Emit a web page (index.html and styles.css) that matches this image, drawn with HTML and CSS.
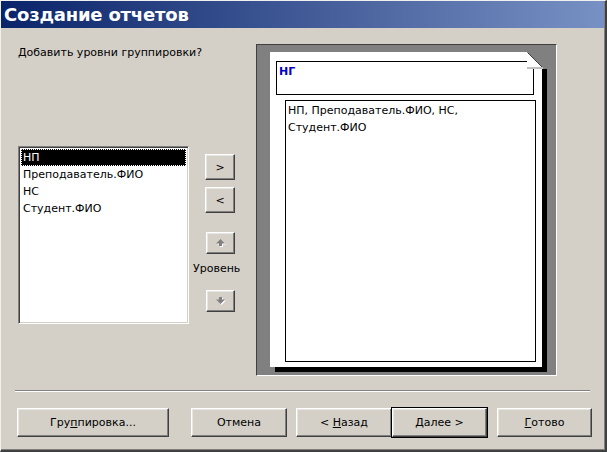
FILE: index.html
```html
<!DOCTYPE html>
<html lang="ru">
<head>
    <meta charset="UTF-8">
    <title>Создание отчетов</title>
    <link rel="stylesheet" href="styles.css">
</head>
<body>
    <div class="window">
        <div class="titlebar">Создание отчетов</div>

        <div class="main">
            <!-- Available fields -->
            <div class="left">
                <p class="prompt">Добавить уровни группировки?</p>
                <ul class="listbox">
                    <li class="selected">НП</li>
                    <li>Преподаватель.ФИО</li>
                    <li>НС</li>
                    <li>Студент.ФИО</li>
                </ul>
            </div>

            <!-- Move buttons -->
            <div class="mover">
                <button class="btn move add">&gt;</button>
                <button class="btn move remove">&lt;</button>
                <button class="btn level-btn up">
                    <svg width="10" height="9" viewBox="0 0 10 9">
                        <polygon points="5.5,1 10,5.5 7,5.5 7,8 4,8 4,5.5 1,5.5" fill="#fff"/>
                        <polygon points="4.5,0 9,4.5 6,4.5 6,7 3,7 3,4.5 0,4.5" fill="#808080"/>
                    </svg>
                </button>
                <span class="level">Уровень</span>
                <button class="btn level-btn down">
                    <svg width="10" height="9" viewBox="0 0 10 9">
                        <polygon points="5.5,8 10,3.5 7,3.5 7,1 4,1 4,3.5 1,3.5" fill="#fff"/>
                        <polygon points="4.5,7 9,2.5 6,2.5 6,0 3,0 3,2.5 0,2.5" fill="#808080"/>
                    </svg>
                </button>
            </div>

            <!-- Report preview -->
            <div class="preview">
                <div class="page">
                    <svg class="fold" width="20" height="17" viewBox="0 0 20 17">
                        <rect x="0" y="0" width="20" height="17" fill="#808080"/>
                        <rect x="0" y="15" width="16" height="2" fill="#c0c0c0"/>
                        <polygon points="0,0 15,15 0,15" fill="#fff"/>
                        <line x1="0.5" y1="0.5" x2="15" y2="15" stroke="#404040" stroke-width="1"/>
                    </svg>
                    <div class="page-head">НГ</div>
                    <div class="page-body">НП, Преподаватель.ФИО, НС,<br>Студент.ФИО</div>
                </div>
            </div>
        </div>

        <div class="separator"></div>

        <div class="actions">
            <button class="btn wide">Гру<u>п</u>пировка...</button>
            <button class="btn cancel">Отмена</button>
            <button class="btn back">&lt;&nbsp;<u>Н</u>азад</button>
            <button class="btn next default"><u>Д</u>алее&nbsp;&gt;</button>
            <button class="btn finish"><u>Г</u>отово</button>
        </div>
    </div>
</body>
</html>
```

FILE: styles.css
```css
/* Reset */
* {
    margin: 0;
    padding: 0;
    box-sizing: border-box;
}

body {
    font-family: 'DejaVu Sans', 'Liberation Sans', sans-serif;
    font-size: 11px;
    color: #000;
    background: #d4d0c8;
}

/* Window frame */
.window {
    width: 607px;
    height: 452px;
    background: #d4d0c8;
    border-top: 1px solid #f0f0f0;
    border-left: 1px solid #f0f0f0;
    border-right: 2px solid #404040;
    border-bottom: 2px solid #404040;
    box-shadow: inset -1px -1px #808080;
}

.titlebar {
    height: 27px;
    margin-right: 1px;
    padding-left: 3px;
    background: linear-gradient(to right, #0a246a, #7891c4);
    color: #fff;
    font-weight: bold;
    font-size: 18px;
    letter-spacing: -0.2px;
    line-height: 27px;
}

/* Main area */
.main {
    display: flex;
    padding: 16px 0 0 17px;
    height: 348px;
}

.left {
    width: 171px;
}

.prompt {
    margin-top: 2px;
    line-height: 14px;
    white-space: nowrap;
}

.listbox {
    list-style: none;
    margin-top: 86px;
    height: 178px;
    background: #fff;
    border: 1px solid;
    border-color: #808080 #fff #fff #808080;
    box-shadow: inset 1px 1px #404040, inset -1px -1px #d4d0c8;
    padding: 2px;
}

.listbox li {
    height: 17px;
    line-height: 17px;
    padding-left: 2px;
    white-space: nowrap;
}

.listbox li.selected {
    background: #000;
    color: #fff;
    outline: 1px dotted #fff;
    outline-offset: -1px;
}

/* Buttons */
.btn {
    font: inherit;
    color: #000;
    background: #d4d0c8;
    border: 1px solid;
    border-color: #fff #404040 #404040 #fff;
    box-shadow: inset -1px -1px #808080, inset 1px 1px #e8e6e0;
    text-align: center;
}

.btn svg {
    display: block;
    margin: 0 auto;
}

.mover {
    width: 67px;
    display: flex;
    flex-direction: column;
    align-items: flex-start;
}

.move {
    width: 30px;
    height: 26px;
    margin-left: 16px;
}

.add {
    margin-top: 110px;
}

.remove {
    margin-top: 7px;
}

.level-btn {
    width: 29px;
    height: 22px;
    margin-left: 17px;
}

.up {
    margin-top: 19px;
}

.level {
    margin: 8px 0 0 4px;
    line-height: 14px;
}

.down {
    margin-top: 14px;
}

/* Preview */
.preview {
    width: 301px;
    height: 332px;
    background: #808080;
    border: 1px solid;
    border-color: #404040 #fff #fff #404040;
    padding: 7px 0 0 13px;
}

.page {
    position: relative;
    width: 272px;
    height: 315px;
    background: #fff;
    box-shadow: 5px 5px 0 #000;
    display: flex;
    flex-direction: column;
}

.fold {
    position: absolute;
    top: 0;
    right: -5px;
    display: block;
}

.page-head {
    height: 34px;
    margin: 9px 8px 0 6px;
    border: 1px solid #000;
    padding: 3px 0 0 2px;
    color: #0000c8;
    font-weight: bold;
}

.page-body {
    flex: 1;
    margin: 5px 6px 5px 15px;
    border: 1px solid #000;
    padding: 1px 0 0 2px;
    line-height: 17px;
}

/* Separator */
.separator {
    margin: 14px 0 0 14px;
    width: 575px;
    border-top: 1px solid #808080;
    border-bottom: 1px solid #fff;
}

/* Bottom buttons */
.actions {
    display: flex;
    padding-left: 16px;
    margin-top: 16px;
}

.actions .btn {
    height: 29px;
}

.wide {
    width: 152px;
}

.cancel {
    width: 96px;
    margin-left: 22px;
}

.back {
    width: 96px;
    margin-left: 9px;
}

.next {
    width: 95px;
}

.finish {
    width: 95px;
    margin-left: 10px;
}

.default {
    outline: 1px solid #000;
}
```
